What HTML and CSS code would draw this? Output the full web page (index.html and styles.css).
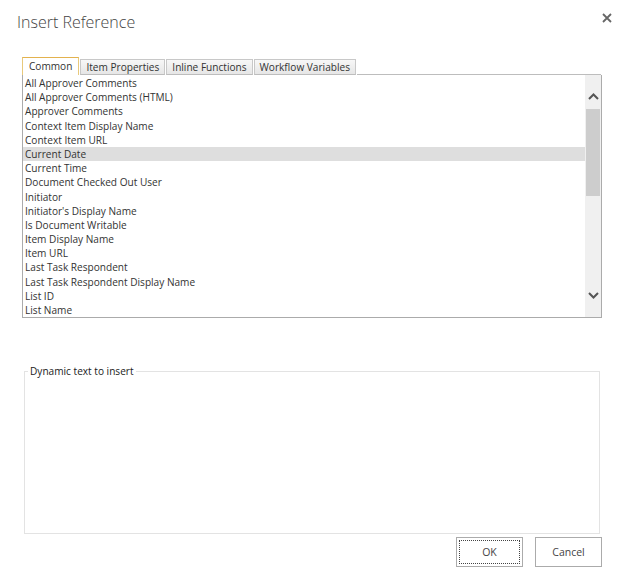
FILE: index.html
```html
<!DOCTYPE html>
<html>
<head>
<meta charset="utf-8">
<link rel="stylesheet" href="styles.css">
</head>
<body>
<div class="dialog">
  <div class="header">
    <h1 class="title">Insert Reference</h1>
    <button class="close" aria-label="Close">
      <svg width="10" height="10" viewBox="0 0 10 10"><path d="M1 1L9 9M9 1L1 9" stroke="#666" stroke-width="1.8"/></svg>
    </button>
  </div>
  <div class="tabs">
    <div class="tab active">Common</div>
    <div class="tab">Item Properties</div>
    <div class="tab">Inline Functions</div>
    <div class="tab">Workflow Variables</div>
    <div class="tab-fill"></div>
  </div>
  <div class="listbox">
    <ul class="items">
      <li>All Approver Comments</li>
      <li>All Approver Comments (HTML)</li>
      <li>Approver Comments</li>
      <li>Context Item Display Name</li>
      <li>Context Item URL</li>
      <li class="selected">Current Date</li>
      <li>Current Time</li>
      <li>Document Checked Out User</li>
      <li>Initiator</li>
      <li>Initiator's Display Name</li>
      <li>Is Document Writable</li>
      <li>Item Display Name</li>
      <li>Item URL</li>
      <li>Last Task Respondent</li>
      <li>Last Task Respondent Display Name</li>
      <li>List ID</li>
      <li>List Name</li>
    </ul>
    <div class="scrollbar">
      <div class="arrow up">
        <svg width="11" height="7" viewBox="0 0 11 7"><path d="M1 6L5.5 1.5L10 6" fill="none" stroke="#555" stroke-width="2"/></svg>
      </div>
      <div class="track">
        <div class="thumb"></div>
      </div>
      <div class="arrow down">
        <svg width="11" height="7" viewBox="0 0 11 7"><path d="M1 1L5.5 5.5L10 1" fill="none" stroke="#555" stroke-width="2"/></svg>
      </div>
    </div>
  </div>
  <fieldset class="dynamic">
    <legend>Dynamic text to insert</legend>
  </fieldset>
  <div class="buttons">
    <button class="btn ok"><span>OK</span></button>
    <button class="btn">Cancel</button>
  </div>
</div>
</body>
</html>
```

FILE: styles.css
```css
* { box-sizing: border-box; }
html, body { margin: 0; padding: 0; background: #fff; }
body {
  font-family: "Segoe UI", "Open Sans", "Noto Sans", sans-serif;
  font-size: 10.1px;
  color: #333;
  width: 626px;
  height: 585px;
  overflow: hidden;
}
.dialog {
  padding: 0 25px 0 22px;
}
.header {
  display: flex;
  justify-content: space-between;
  align-items: flex-start;
  height: 57px;
}
.title {
  margin: 11px 0 0 -5px;
  font-size: 16px;
  font-weight: 300;
  color: #444;
}
.close {
  margin: 13px -11px 0 0;
  border: 0;
  background: none;
  padding: 0;
  width: 10px;
  height: 10px;
  display: flex;
}
.tabs {
  display: flex;
  align-items: flex-end;
  height: 18px;
}
.tab {
  height: 16px;
  line-height: 14px;
  padding: 0 5px;
  margin-right: 1px;
  border: 1px solid #c8c8c8;
  border-bottom: 1px solid #bdbdbd;
  background: linear-gradient(#f7f7f7, #e6e6e6);
  color: #333;
  white-space: nowrap;
}
.tab.active {
  height: 18px;
  line-height: 17px;
  padding: 0 6px;
  background: #fff;
  border-color: #e8c97c;
  border-top: 1px solid #e3b24e;
  border-bottom: 0;
}
.tab-fill {
  flex: 1;
  border-bottom: 1px solid #bdbdbd;
  height: 1px;
}
.listbox {
  display: flex;
  width: 580px;
  height: 243px;
  border: 1px solid #ababab;
  border-top: 0;
}
.items {
  list-style: none;
  margin: 0;
  padding: 1px 0 0;
  flex: 1;
}
.items li {
  height: 14.2px;
  line-height: 14px;
  padding-left: 2px;
  white-space: nowrap;
}
.items li.selected {
  background: #dedede;
}
.scrollbar {
  width: 16px;
  background: #f0f0f0;
  display: flex;
  flex-direction: column;
}
.arrow {
  display: flex;
  justify-content: center;
}
.arrow.up {
  height: 34px;
  padding-top: 18px;
}
.arrow.down {
  height: 34px;
  padding-top: 9px;
}
.track {
  flex: 1;
  padding: 0 1px;
}
.thumb {
  height: 87px;
  background: #cdcdcd;
}
.dynamic {
  margin: 47px 0 0 2px;
  width: 576px;
  height: 169px;
  border: 1px solid #e3e3e3;
  padding: 0;
}
.dynamic legend {
  margin-left: 3px;
  padding: 0 2px;
  color: #222;
  line-height: 12px;
}
.buttons {
  display: flex;
  justify-content: flex-end;
  gap: 12px;
  margin-top: 3px;
  margin-right: -1px;
}
.btn {
  width: 67px;
  height: 30px;
  border: 1px solid #ababab;
  background: #fff;
  font-family: inherit;
  font-size: 10.5px;
  color: #444;
  padding: 0;
  display: flex;
  align-items: center;
  justify-content: center;
}
.btn.ok {
  padding: 2px;
}
.btn.ok span {
  flex: 1;
  align-self: stretch;
  display: flex;
  align-items: center;
  justify-content: center;
  border: 1px dotted #444;
}
```
